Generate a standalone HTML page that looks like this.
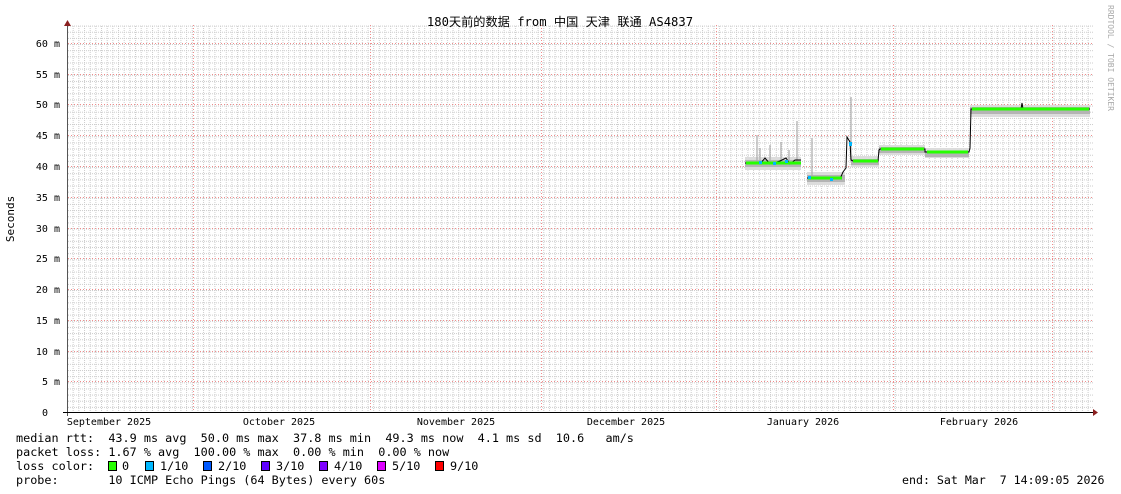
<!DOCTYPE html>
<html><head><meta charset="utf-8"><style>
html,body{margin:0;padding:0;background:#fff;width:1121px;height:494px;overflow:hidden}
svg{display:block}
text{font-family:"DejaVu Sans Mono","Liberation Mono",monospace;white-space:pre}
</style></head><body>
<svg width="1121" height="494" viewBox="0 0 1121 494" xmlns="http://www.w3.org/2000/svg">
<defs>
<pattern id="vmin" x="67" y="0" width="5.67" height="2" patternUnits="userSpaceOnUse">
<rect x="0" y="0" width="1" height="1" fill="#cccccc"/></pattern>
<pattern id="hmin" x="0" y="1" width="2" height="6.15" patternUnits="userSpaceOnUse">
<rect x="0" y="0" width="1" height="1" fill="#cccccc"/></pattern>
</defs>
<rect width="1121" height="494" fill="#fff"/>
<rect x="68" y="25" width="1025" height="387" fill="url(#vmin)"/>
<rect x="68" y="25" width="1025" height="387" fill="url(#hmin)"/>
<g stroke="#f08c8c" stroke-width="1" stroke-dasharray="1,2">
<line x1="68" y1="43.5" x2="1093" y2="43.5"/><line x1="68" y1="74.5" x2="1093" y2="74.5"/>
<line x1="68" y1="104.5" x2="1093" y2="104.5"/><line x1="68" y1="135.5" x2="1093" y2="135.5"/>
<line x1="68" y1="166.5" x2="1093" y2="166.5"/><line x1="68" y1="197.5" x2="1093" y2="197.5"/>
<line x1="68" y1="228.5" x2="1093" y2="228.5"/><line x1="68" y1="258.5" x2="1093" y2="258.5"/>
<line x1="68" y1="289.5" x2="1093" y2="289.5"/><line x1="68" y1="320.5" x2="1093" y2="320.5"/>
<line x1="68" y1="351.5" x2="1093" y2="351.5"/><line x1="68" y1="381.5" x2="1093" y2="381.5"/>
<line x1="193.5" y1="25" x2="193.5" y2="412"/><line x1="370.5" y1="25" x2="370.5" y2="412"/>
<line x1="541.5" y1="25" x2="541.5" y2="412"/><line x1="716.5" y1="25" x2="716.5" y2="412"/>
<line x1="893.5" y1="25" x2="893.5" y2="412"/><line x1="1052.5" y1="25" x2="1052.5" y2="412"/>
</g>
<g fill="#dcdcdc">
<rect x="745" y="157" width="56" height="13"/><rect x="807" y="172" width="38" height="13"/>
<rect x="851" y="156" width="28" height="11"/><rect x="879" y="145" width="46" height="10"/>
<rect x="925" y="148" width="44" height="10"/><rect x="970" y="105" width="120" height="12"/>
</g>
<g fill="#b4b4b4">
<rect x="745" y="160" width="56" height="7"/><rect x="807" y="175" width="38" height="7"/>
<rect x="851" y="159" width="28" height="6"/><rect x="879" y="147" width="46" height="6"/>
<rect x="925" y="151" width="44" height="6"/><rect x="970" y="107" width="120" height="7"/>
</g>
<g stroke="#aaa" stroke-width="1.2">
<line x1="757" y1="135" x2="757" y2="162"/><line x1="770" y1="145" x2="770" y2="162"/>
<line x1="781" y1="142" x2="781" y2="162"/><line x1="797" y1="121" x2="797" y2="162"/>
<line x1="812" y1="138" x2="812" y2="176"/><line x1="851" y1="97" x2="851" y2="160"/>
<line x1="760" y1="148" x2="760" y2="162"/><line x1="789" y1="150" x2="789" y2="162"/>
</g>
<g stroke="#000" stroke-width="1" fill="none">
<polyline points="745,163 760,164 765,158 770,164 780,161 786,158 790,164 795,160 801,160"/>
<polyline points="807,178 840,179 843,172 846,168 847,137 850,142 851,160 853,161 878,161 879,150 880,149 925,149 925,152 969,152 970,148 971,109 1021,109 1022,103 1023,109 1090,109"/>
</g>
<g stroke="#26ff00" stroke-width="3" fill="none">
<line x1="746" y1="163" x2="801" y2="163"/><line x1="808" y1="178" x2="842" y2="178"/>
<line x1="853" y1="161" x2="878" y2="161"/><line x1="881" y1="149" x2="924" y2="149"/>
<line x1="927" y1="152" x2="968" y2="152"/><line x1="972" y1="109" x2="1089" y2="109"/>
</g>
<g fill="#00b8ff"><rect x="759" y="161" width="3" height="3"/><rect x="773" y="162" width="3" height="3"/><rect x="785" y="160" width="3" height="3"/><rect x="808" y="176" width="3" height="3"/><rect x="830" y="178" width="3" height="3"/><rect x="849" y="142" width="3" height="4"/></g>
<line x1="67.5" y1="25" x2="67.5" y2="416" stroke="#555" stroke-width="1"/>
<polygon points="64,26 71,26 67.5,20" fill="#8b2020"/>
<line x1="63" y1="412.5" x2="1094" y2="412.5" stroke="#000" stroke-width="1"/>
<polygon points="1093,409 1093,416 1098,412.5" fill="#8b2020"/>
<g font-size="10" fill="#000" text-anchor="end">
<text x="60" y="47">60 m</text><text x="60" y="78">55 m</text><text x="60" y="108">50 m</text>
<text x="60" y="139">45 m</text><text x="60" y="170">40 m</text><text x="60" y="201">35 m</text>
<text x="60" y="232">30 m</text><text x="60" y="262">25 m</text><text x="60" y="293">20 m</text>
<text x="60" y="324">15 m</text><text x="60" y="355">10 m</text><text x="60" y="385">5 m</text>
<text x="48" y="416">0</text>
</g>
<g font-size="10" fill="#000" text-anchor="middle">
<text x="109" y="425">September 2025</text><text x="279" y="425">October 2025</text>
<text x="456" y="425">November 2025</text><text x="626" y="425">December 2025</text>
<text x="803" y="425">January 2026</text><text x="979" y="425">February 2026</text>
</g>
<text x="560" y="26" font-size="12.2" text-anchor="middle" style='font-family:"DejaVu Sans Mono","Noto Sans CJK SC",monospace'>180天前的数据 from 中国 天津 联通 AS4837</text>
<text transform="translate(14,219) rotate(-90)" font-size="11" text-anchor="middle">Seconds</text>
<text transform="translate(1108,5) rotate(90)" font-size="8" fill="#aaa">RRDTOOL / TOBI OETIKER</text>
<g font-size="11.8" fill="#000">
<text x="16" y="442">median rtt:  43.9 ms avg  50.0 ms max  37.8 ms min  49.3 ms now  4.1 ms sd  10.6   am/s</text>
<text x="16" y="456">packet loss: 1.67 % avg  100.00 % max  0.00 % min  0.00 % now</text>
<text x="16" y="470">loss color:</text>
<text x="122" y="470">0</text><text x="160" y="470">1/10</text><text x="218" y="470">2/10</text>
<text x="276" y="470">3/10</text><text x="334" y="470">4/10</text><text x="392" y="470">5/10</text><text x="450" y="470">9/10</text>
<text x="16" y="484">probe:       10 ICMP Echo Pings (64 Bytes) every 60s</text>
<text x="902" y="484" font-size="11.6">end: Sat Mar  7 14:09:05 2026</text>
</g>
<g stroke="#000" stroke-width="1">
<rect x="108.5" y="461.5" width="8" height="9" fill="#26ff00"/>
<rect x="145.5" y="461.5" width="8" height="9" fill="#00b8ff"/>
<rect x="203.5" y="461.5" width="8" height="9" fill="#0059ff"/>
<rect x="261.5" y="461.5" width="8" height="9" fill="#5e00ff"/>
<rect x="319.5" y="461.5" width="8" height="9" fill="#7e00ff"/>
<rect x="377.5" y="461.5" width="8" height="9" fill="#dd00ff"/>
<rect x="435.5" y="461.5" width="8" height="9" fill="#ff0000"/>
</g>
</svg>
</body></html>
